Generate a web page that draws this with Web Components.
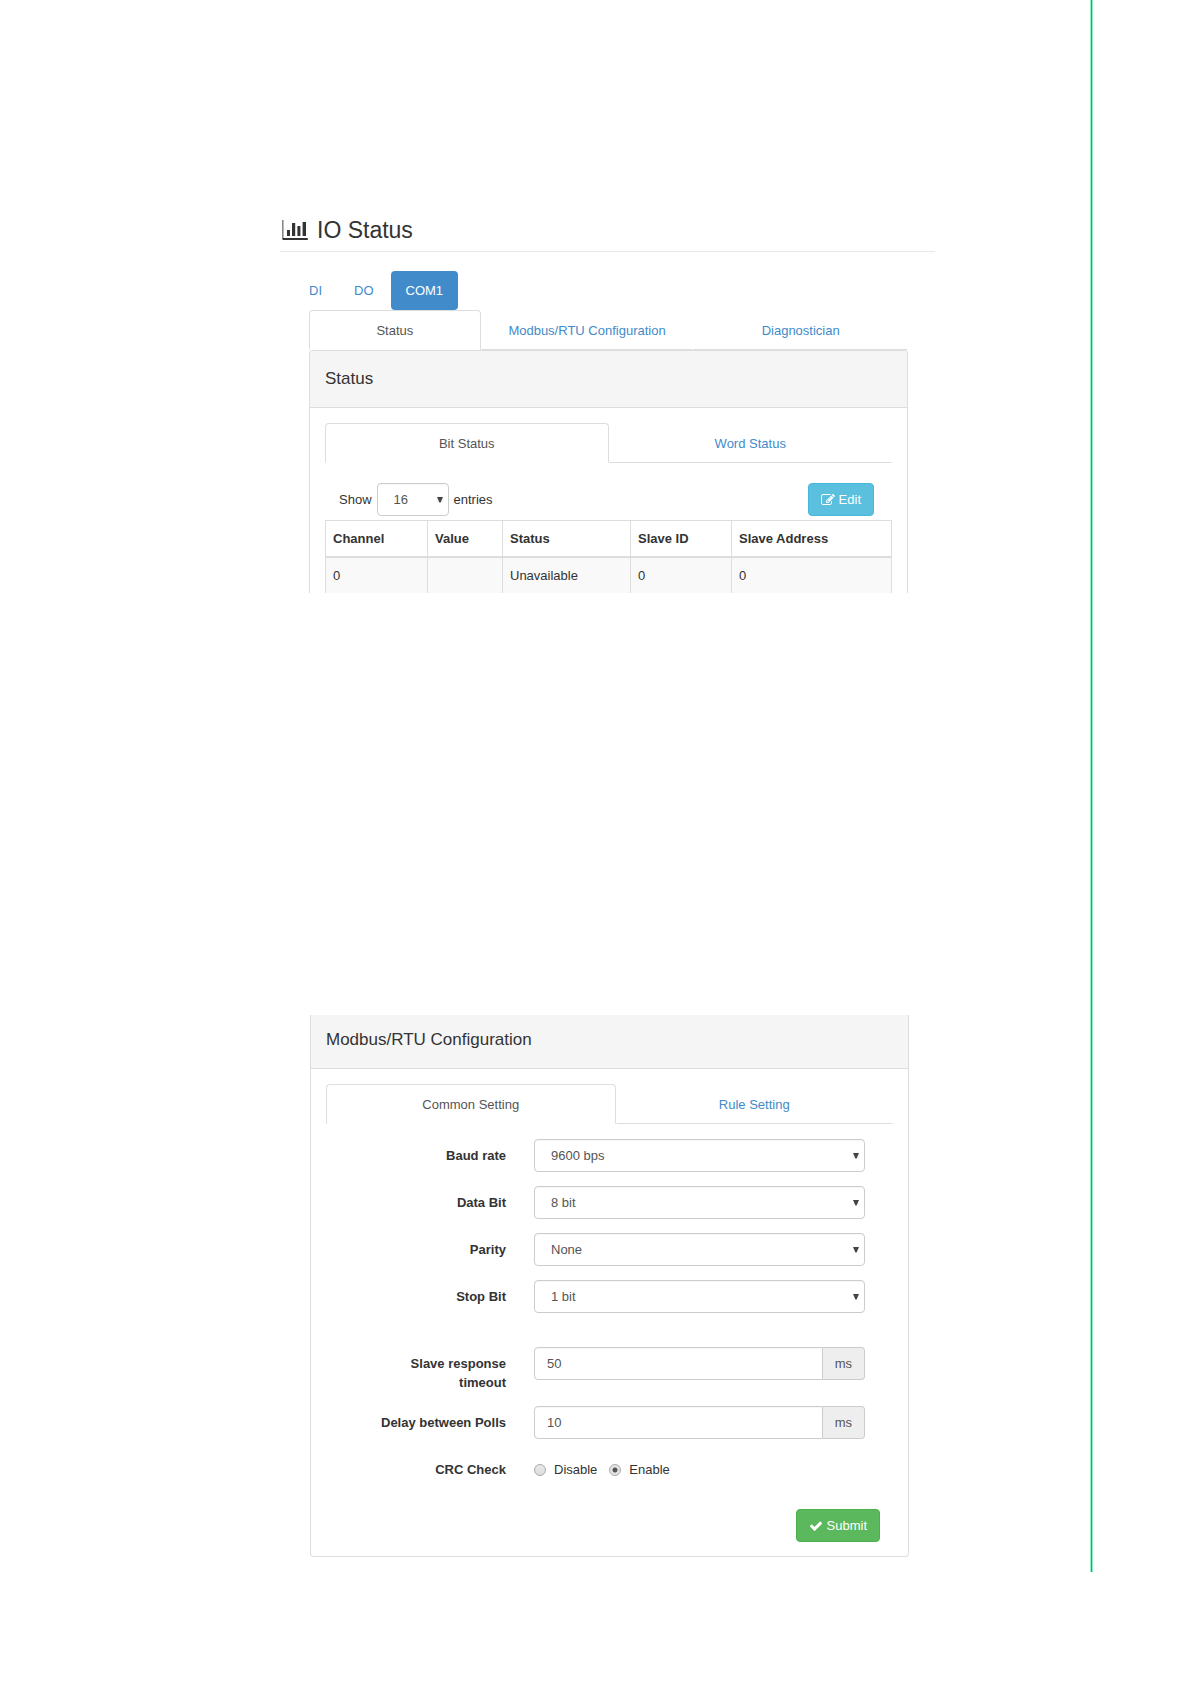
<!DOCTYPE html>
<html lang=en>
<title>IO Status</title>
<meta charset=utf-8>
<meta name=viewport content="width=device-width, initial-scale=1.0">
<style>
:root {
    --text: #333; --muted: #555; --link: #428bca;
    --line: #ddd; --field: #ccc;
}
body {
    margin: 0; background: #fff; color: var(--text);
    font: 13px/19px "Liberation Sans", Arial, sans-serif;
}
</style>
<body>
<manual-page>
    <io-heading>IO Status</io-heading>
    <pill-nav>
        <a href="#di">DI</a>
        <a href="#do">DO</a>
        <a href="#com1" class=active>COM1</a>
    </pill-nav>
    <page-figure>
        <tab-bar style="--cols: 172fr 213fr 215fr">
            <a href="#status" class=active>Status</a>
            <a href="#modbus">Modbus/RTU Configuration</a>
            <a href="#diag">Diagnostician</a>
        </tab-bar>
        <panel-box class=open-bottom>
            <span slot=title>Status</span>
            <tab-bar>
                <a href="#bit" class=active>Bit Status</a>
                <a href="#word">Word Status</a>
            </tab-bar>
            <table-tools></table-tools>
            <status-table></status-table>
        </panel-box>
    </page-figure>
    <page-figure class=second>
        <panel-box class=open-top>
            <span slot=title>Modbus/RTU Configuration</span>
            <tab-bar style="--cols: 289fr 277fr">
                <a href="#common" class=active>Common Setting</a>
                <a href="#rule">Rule Setting</a>
            </tab-bar>
            <setting-form>
                <select-field label="Baud rate" value="9600 bps"></select-field>
                <select-field label="Data Bit" value="8 bit"></select-field>
                <select-field label="Parity" value="None"></select-field>
                <select-field label="Stop Bit" value="1 bit"></select-field>
                <unit-field class=group label="Slave response timeout" value="50" unit="ms"></unit-field>
                <unit-field label="Delay between Polls" value="10" unit="ms"></unit-field>
                <radio-field label="CRC Check" options="Disable,Enable" value="Enable"></radio-field>
                <icon-button slot=actions icon=check>Submit</icon-button>
            </setting-form>
        </panel-box>
    </page-figure>
</manual-page>
<script>
const define = (name, html) => customElements.define(name, class extends HTMLElement {
    constructor() {
        super();
        this.attachShadow({mode: 'open'});
    }
    connectedCallback() {
        this.shadowRoot.innerHTML = typeof html == 'function' ? html(this) : html;
    }
});
const attr = (el, name) => el.getAttribute(name) || '';

// shared by everything that has a text box or a drop-down
const fieldCss = `
* { box-sizing: border-box; }
select, input[type=text] {
    width: 100%; height: 33px; margin: 0;
    border: 1px solid var(--field); border-radius: 4px;
    background: #fff; color: var(--muted); font: inherit;
    box-shadow: inset 0 1px 1px #00000009;
}
select { appearance: none; padding: 0 16px; }
.select { display: grid; align-items: center; }
.select > * { grid-area: 1 / 1; }
.select svg { justify-self: end; width: 6px; height: 6px; margin-right: 6px; fill: #444; pointer-events: none; }
`;
const rowCss = fieldCss + `
:host { display: grid; grid-template-columns: 138px minmax(0, 1fr); gap: 28px; }
:host(.group) { margin-top: 20px; }
.label { padding-top: 7px; font-weight: bold; text-align: right; }
`;
const selectBox = value => `<div class=select>
    <select id=field><option>${value}</option></select>
    <svg viewBox="0 0 6 6" aria-hidden=true><path d="M0 0h6L3.6 5.500H2.4z"/></svg>
</div>`;

define('manual-page', `<style>
:host { display: block; margin-right: 98px; }
main {
    box-sizing: border-box; min-height: 1572px; padding: 215px 157px 15px 280px;
    border-right: 1px solid #93efc8;
    box-shadow: inset -1px 0 #2f9e6b, inset -2px 0 #93efc8;
}
</style>
<main><slot></slot></main>`);

define('io-heading', `<style>
h1 {
    display: flex; align-items: center; gap: 9px; margin: 0 0 19px; padding: 0 0 6px 2px;
    border-bottom: 1px solid #e7e7e7; font-size: 23px; line-height: 30px; font-weight: normal;
}
svg { width: 26px; height: 20px; }
</style>
<h1>
    <svg viewBox="0 0 26 20" fill="#333" aria-hidden=true>
        <path fill="#888" d="M0 0h1.6v19H0z"/>
        <path d="M.6 18h25.2v2H.6zM5 10h3v6H5zM10 3h3.2v13H10zM15.4 6h3v10h-3zM20.600 2H24v14h-3.400z"/>
    </svg>
    <span><slot></slot></span>
</h1>`);

define('pill-nav', `<style>
nav { display: flex; gap: 2px; margin-left: 14px; }
::slotted(a) { padding: 10px 15px; border-radius: 4px; color: var(--link); text-decoration: none; }
::slotted(a.active) { background: var(--link); color: #fff; }
</style>
<nav><slot></slot></nav>`);

define('page-figure', `<style>
:host { display: block; margin: 0 27px 0 29px; }
:host(.second) { margin: 422px 26px 0 30px; }
</style>
<slot></slot>`);

define('tab-bar', `<style>
nav { display: grid; grid-template-columns: var(--cols, 1fr 1fr); }
::slotted(a) {
    padding: 10px 10px 9px; border: 1px solid transparent; border-bottom-color: var(--line);
    color: var(--link); text-align: center; text-decoration: none;
}
::slotted(a.active) {
    border-color: var(--line); border-bottom-color: #fff;
    border-radius: 4px 4px 0 0; color: var(--muted);
}
</style>
<nav><slot></slot></nav>`);

define('panel-box', `<style>
:host { display: block; --cols: 1fr 1fr; }
section { border: 1px solid var(--line); border-radius: 4px; overflow: hidden; }
h2 {
    margin: 0; padding: 18px 15px 19px; background: #f5f5f5; border-bottom: 1px solid var(--line);
    font-size: 17px; line-height: 19px; font-weight: normal;
}
div { padding: 15px 15px 14px; }
:host(.open-bottom) section { border-bottom: 0; border-radius: 4px 4px 0 0; }
:host(.open-bottom) div { padding-bottom: 0; }
:host(.open-top) section { border-top: 0; border-radius: 0 0 4px 4px; }
:host(.open-top) h2 { padding-top: 15px; }
</style>
<section>
    <h2><slot name=title></slot></h2>
    <div><slot></slot></div>
</section>`);

const icons = {
    check: 'M1671 566q0 40-28 68l-724 724-136 136q-28 28-68 28t-68-28l-136-136-362-362q-28-28-28-68t28-68l136-136q28-28 68-28t68 28l294 295 656-657q28-28 68-28t68 28l136 136q28 28 28 68z',
    edit: 'M888 1184l116-116-152-152-116 116v56h96v96h56zm440-720q-16-16-33 1l-350 350q-17 17-1 33t33-1l350-350q17-17 1-33zm80 594v190q0 119-84.500 203.500t-203.500 84.500h-832q-119 0-203.500-84.500t-84.500-203.500v-832q0-119 84.500-203.500t203.500-84.500h832q63 0 117 25 15 7 18 23 3 17-9 29l-49 49q-14 14-32 8-23-6-45-6h-832q-66 0-113 47t-47 113v832q0 66 47 113t113 47h832q66 0 113-47t47-113v-126q0-13 9-22l64-64q15-15 35-7t20 29zm-96-738l288 288-672 672h-288v-288zm444 132l-92 92-288-288 92-92q28-28 68-28t68 28l152 152q28 28 28 68t-28 68z'
};
define('icon-button', el => `<style>
:host { display: block; }
button {
    display: flex; align-items: center; gap: 4px; height: 33px; padding: 0 12px;
    border: 1px solid #4cae4c; border-radius: 4px; background: #5cb85c; color: #fff; font: inherit;
}
:host([icon=edit]) button { border-color: #46b8da; background: #5bc0de; }
svg { width: 14px; height: 14px; fill: #fff; }
</style>
<button type=button>
    <svg viewBox="0 0 1792 1792" aria-hidden=true><path d="${icons[attr(el, 'icon')]}"/></svg>
    <span><slot></slot></span>
</button>`);

define('table-tools', `<style>${fieldCss}
:host { display: flex; align-items: center; gap: 5px; padding: 20px 18px 4px 14px; }
.select { width: 72px; }
icon-button { margin-left: auto; }
</style>
<label for=field>Show</label>${selectBox('16')}<span>entries</span>
<icon-button icon=edit>Edit</icon-button>`);

define('status-table', `<style>
table { width: 100%; border-collapse: collapse; table-layout: fixed; }
th, td { height: 19px; padding: 8px 7px; border: 1px solid var(--line); text-align: left; }
th { border-bottom-width: 2px; }
td { background: #f9f9f9; border-bottom: 0; }
</style>
<table>
    <colgroup><col width=102><col width=75><col width=128><col width=101><col></colgroup>
    <thead><tr><th>Channel</th><th>Value</th><th>Status</th><th>Slave ID</th><th>Slave Address</th></tr></thead>
    <tbody><tr><td>0</td><td></td><td>Unavailable</td><td>0</td><td>0</td></tr></tbody>
</table>`);

define('setting-form', `<style>
form { display: grid; gap: 14px; padding: 15px 28px 23px 42px; }
footer { display: flex; justify-content: flex-end; padding-right: 13px; }
</style>
<form><slot></slot></form>
<footer><slot name=actions></slot></footer>`);

define('select-field', el => `<style>${rowCss}</style>
<label class=label for=field>${attr(el, 'label')}</label>
${selectBox(attr(el, 'value'))}`);

define('unit-field', el => `<style>${rowCss}
.unit { display: flex; align-items: flex-start; }
input[type=text] { flex: 1; min-width: 0; padding: 0 12px; border-radius: 4px 0 0 4px; }
.unit span {
    height: 33px; padding: 6px 12px; border: 1px solid var(--field); border-left: 0;
    border-radius: 0 4px 4px 0; background: #eee; color: var(--muted);
}
</style>
<label class=label for=field>${attr(el, 'label')}</label>
<div class=unit><input type=text id=field value="${attr(el, 'value')}"><span>${attr(el, 'unit')}</span></div>`);

define('radio-field', el => `<style>${rowCss}
.radios { display: flex; align-items: center; gap: 12px; height: 33px; }
.radios label { display: flex; align-items: center; gap: 8px; }
input {
    appearance: none; width: 12px; height: 12px; margin: 0;
    border: 1px solid #aaa; border-radius: 50%; background: linear-gradient(#e8e8e8, #ddd);
}
input:checked { background: radial-gradient(circle, #555 0 2px, #e4e4e4 3px); }
</style>
<span class=label id=caption>${attr(el, 'label')}</span>
<div class=radios role=radiogroup aria-labelledby=caption>
    ${attr(el, 'options').split(',').map(o => `<label><input type=radio name=choice${o == attr(el, 'value') ? ' checked' : ''}>${o}</label>`).join('')}
</div>`);
</script>
</body>
</html>
